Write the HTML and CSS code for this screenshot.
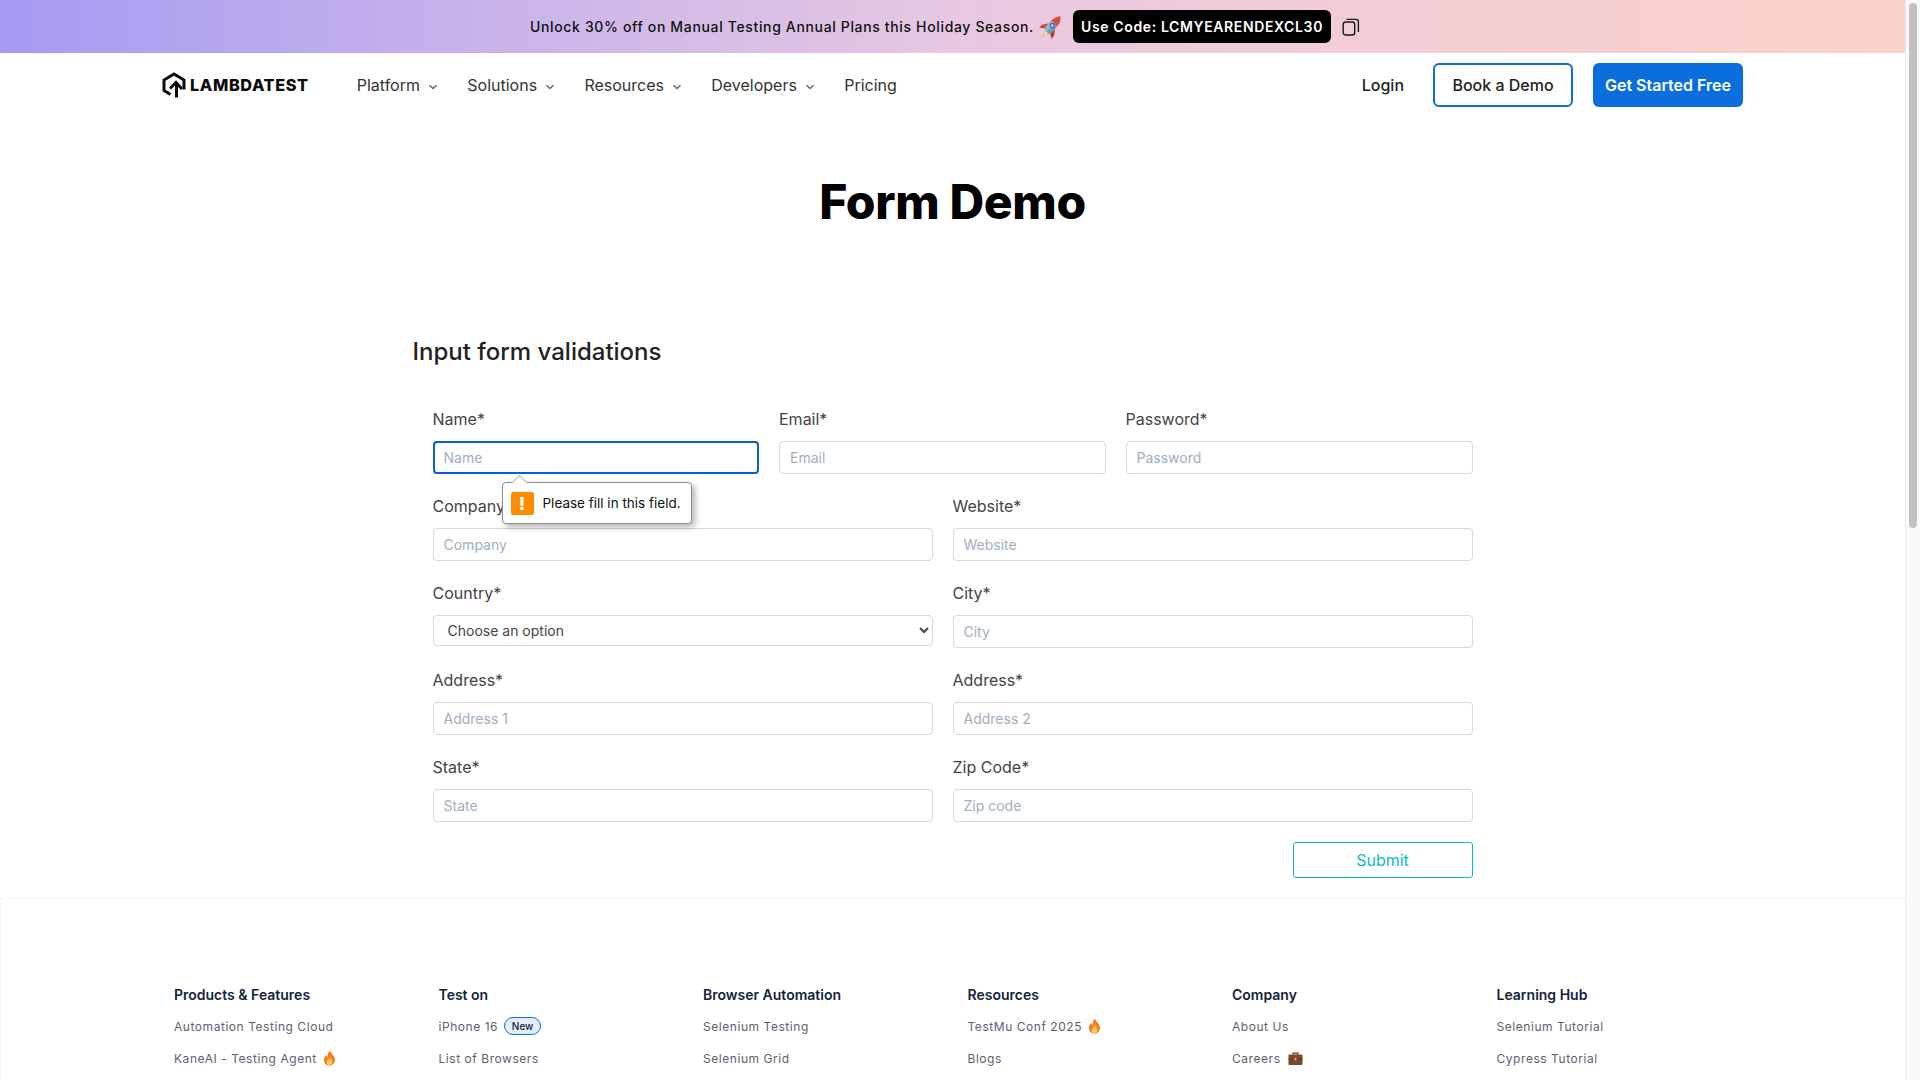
FILE: index.html
```html
<!DOCTYPE html>
<html lang="en">
<head>
<meta charset="utf-8">
<title>Form Demo</title>
<link rel="stylesheet" href="styles.css">
</head>
<body>
<div class="app">
<div class="page">
  <div class="banner">
    <span class="banner-text">Unlock 30% off on Manual Testing Annual Plans this Holiday Season.</span>
    <svg class="rocket" viewBox="0 0 24 24" aria-hidden="true">
      <g transform="rotate(42 12 12)">
        <path d="M9.600 18h4.800L12 26z" fill="#f5b942"/>
        <path d="M10.800 18h2.400L12 23z" fill="#fff2c4"/>
        <path d="M8 10.500 3.800 16.500V20.500L8.800 17z" fill="#d5483c"/>
        <path d="M16 10.500l4.200 6V20.500L15.200 17z" fill="#b93a31"/>
        <path d="M7.800 7H16.200V14.500C16.200 16.500 15.200 18 14.500 18.500H9.500C8.800 18 7.800 16.500 7.800 14.500z" fill="#8db9d3"/>
        <path d="M12 7H16.200V14.500C16.200 16.500 15.200 18 14.500 18.500H12z" fill="#6d9ab8"/>
        <path d="M12-2.500C9.200.5 7.800 4 7.800 7H16.200C16.200 4 14.800.5 12-2.500z" fill="#dc4a3c"/>
        <circle cx="12" cy="10" r="2.500" fill="#3f617b"/>
        <circle cx="12" cy="10" r="1.500" fill="#a8d8ef"/>
      </g>
    </svg>
    <span class="code">Use Code: LCMYEARENDEXCL30</span>
    <svg class="copy" viewBox="0 0 18 18" aria-hidden="true">
      <rect x="1.200" y="4" width="11.500" height="13" rx="2.500" fill="none" stroke="#1a1a1a" stroke-width="1.400"/>
      <path d="M5 1.400h8.800c1.500 0 2.600 1.100 2.600 2.600v9.600" fill="none" stroke="#1a1a1a" stroke-width="1.400" stroke-linecap="round"/>
    </svg>
  </div>

  <nav class="nav">
    <a class="logo">
      <svg class="logo-icon" viewBox="0 0 24 26" aria-hidden="true">
        <path d="M8.500 22.500 2 18.500V8L12 2l10 6v9.500" fill="none" stroke="#0b0b0b" stroke-width="3" stroke-linejoin="miter"/>
        <path d="M14.500 25.500V12M8 16.500l6-6 6 6.500" fill="none" stroke="#0b0b0b" stroke-width="3"/>
      </svg>
      <span class="logo-text">LAMBDATEST</span>
    </a>
    <ul class="menu">
      <li class="menu-item">Platform<svg class="chev" viewBox="0 0 10 6"><path d="M1.500 1.200 5 4.500l3.500-3.300" fill="none" stroke="#666" stroke-width="1.500"/></svg></li>
      <li class="menu-item">Solutions<svg class="chev" viewBox="0 0 10 6"><path d="M1.500 1.200 5 4.500l3.500-3.300" fill="none" stroke="#666" stroke-width="1.500"/></svg></li>
      <li class="menu-item">Resources<svg class="chev" viewBox="0 0 10 6"><path d="M1.500 1.200 5 4.500l3.500-3.300" fill="none" stroke="#666" stroke-width="1.500"/></svg></li>
      <li class="menu-item">Developers<svg class="chev" viewBox="0 0 10 6"><path d="M1.500 1.200 5 4.500l3.500-3.300" fill="none" stroke="#666" stroke-width="1.500"/></svg></li>
      <li class="menu-item">Pricing</li>
    </ul>
    <div class="nav-actions">
      <a class="login">Login</a>
      <a class="btn btn-outline">Book a Demo</a>
      <a class="btn btn-solid">Get Started Free</a>
    </div>
  </nav>

  <h1 class="title">Form Demo</h1>

  <section class="container">
    <h2 class="subtitle">Input form validations</h2>
    <form class="form">
      <div class="row row-3">
        <div class="field field-tip">
          <label class="label">Name*</label>
          <input class="input input-focus" placeholder="Name">
          <div class="tip">
            <span class="tip-arrow"></span>
            <span class="tip-icon">!</span>
            <span class="tip-text">Please fill in this field.</span>
          </div>
        </div>
        <div class="field"><label class="label">Email*</label><input class="input" placeholder="Email"></div>
        <div class="field"><label class="label">Password*</label><input class="input" placeholder="Password"></div>
      </div>
      <div class="row row-2">
        <div class="field"><label class="label">Company*</label><input class="input" placeholder="Company"></div>
        <div class="field"><label class="label">Website*</label><input class="input" placeholder="Website"></div>
      </div>
      <div class="row row-2">
        <div class="field"><label class="label">Country*</label>
          <select class="select"><option>Choose an option</option></select>
        </div>
        <div class="field"><label class="label">City*</label><input class="input" placeholder="City"></div>
      </div>
      <div class="row row-2">
        <div class="field"><label class="label">Address*</label><input class="input" placeholder="Address 1"></div>
        <div class="field"><label class="label">Address*</label><input class="input" placeholder="Address 2"></div>
      </div>
      <div class="row row-2">
        <div class="field"><label class="label">State*</label><input class="input" placeholder="State"></div>
        <div class="field"><label class="label">Zip Code*</label><input class="input" placeholder="Zip code"></div>
      </div>
      <div class="actions"><button type="button" class="submit">Submit</button></div>
    </form>
  </section>

  <footer class="footer">
    <div class="foot-col">
      <h3 class="foot-head">Products &amp; Features</h3>
      <a class="foot-link">Automation Testing Cloud</a>
      <a class="foot-link">KaneAI - Testing Agent
        <svg class="emoji" viewBox="0 0 14 18"><path d="M7.500.5c.6 3 4 5 5.300 8.200C14.300 13 11.500 17.500 7 17.500S-.3 13.500 1 9.200c.5-1.700 1.500-2.700 2.200-3.700.2 1.200.6 2 1.400 2.600C4.600 5.200 5.500 2.500 7.500.5z" fill="#f4801f"/><path d="M7.300 8c.3 1.800 2.700 3 2.700 5.500 0 2.200-1.400 3.600-3 3.600s-3-1.400-3-3.400c0-1.600 1.100-2.300 1.600-3.200.2.600.5 1 .9 1.200C6.400 10.500 6.600 9 7.300 8z" fill="#fcd25a"/></svg>
      </a>
    </div>
    <div class="foot-col">
      <h3 class="foot-head">Test on</h3>
      <a class="foot-link">iPhone 16 <span class="badge">New</span></a>
      <a class="foot-link">List of Browsers</a>
    </div>
    <div class="foot-col">
      <h3 class="foot-head">Browser Automation</h3>
      <a class="foot-link">Selenium Testing</a>
      <a class="foot-link">Selenium Grid</a>
    </div>
    <div class="foot-col">
      <h3 class="foot-head">Resources</h3>
      <a class="foot-link">TestMu Conf 2025
        <svg class="emoji" viewBox="0 0 14 18"><path d="M7.500.5c.6 3 4 5 5.300 8.200C14.300 13 11.500 17.500 7 17.500S-.3 13.500 1 9.200c.5-1.700 1.500-2.700 2.200-3.700.2 1.200.6 2 1.400 2.600C4.600 5.200 5.500 2.500 7.500.5z" fill="#f4801f"/><path d="M7.300 8c.3 1.800 2.700 3 2.700 5.500 0 2.200-1.400 3.600-3 3.600s-3-1.400-3-3.400c0-1.600 1.100-2.300 1.600-3.200.2.600.5 1 .9 1.200C6.400 10.500 6.600 9 7.300 8z" fill="#fcd25a"/></svg>
      </a>
      <a class="foot-link">Blogs</a>
    </div>
    <div class="foot-col">
      <h3 class="foot-head">Company</h3>
      <a class="foot-link">About Us</a>
      <a class="foot-link">Careers
        <svg class="emoji emoji-case" viewBox="0 0 16 16"><path d="M5.500 4V2.200h5V4" fill="none" stroke="#5b3a22" stroke-width="1.400"/><rect x="0.500" y="3.600" width="15" height="11.400" rx="1.200" fill="#7a4a2b"/><rect x="0.500" y="8.200" width="15" height="1" fill="#5b3a22"/><rect x="7" y="7.400" width="2" height="2.600" fill="#e5b567"/></svg>
      </a>
    </div>
    <div class="foot-col">
      <h3 class="foot-head">Learning Hub</h3>
      <a class="foot-link">Selenium Tutorial</a>
      <a class="foot-link">Cypress Tutorial</a>
    </div>
  </footer>
</div>
<aside class="scrollbar"><div class="thumb"></div></aside>
</div>
</body>
</html>
```
FILE: styles.css
```css
* { box-sizing: border-box; }
html, body { margin: 0; height: 100%; overflow: hidden; }
body { font-family: Inter, "Noto Sans", sans-serif; color: #333; background: #fff; }
.app { display: flex; height: 100vh; overflow: hidden; }
.page { flex: 1; min-width: 0; overflow: hidden; }

.scrollbar { width: 15px; flex: none; background: #fafafa; border-left: 1px solid #ececec; padding: 3px 3px 0 3px; }
.thumb { width: 8px; height: 525px; background: #c1c1c1; border-radius: 4px; }

.banner { height: 53px; padding-right: 15px; display: flex; align-items: center; justify-content: center; background: linear-gradient(90deg, #a59bf3 0%, #c7b2ea 25%, #e7c7e2 50%, #f2cdd6 70%, #f9d3c9 100%); }
.banner-text { font-size: 14px; font-weight: 500; letter-spacing: .65px; color: #111; }
.rocket { width: 24px; height: 24px; margin-left: 5px; }
.code { margin-left: 10px; height: 33px; display: flex; align-items: center; padding: 0 8px; background: #000; color: #fff; border-radius: 6px; font-size: 14px; font-weight: 600; letter-spacing: .63px; }
.copy { width: 18px; height: 18px; margin-left: 11px; }

.nav { height: 64px; display: flex; align-items: center; padding: 0 162px 0 162px; }
.logo { display: flex; align-items: center; gap: 4px; }
.logo-icon { width: 24px; height: 26px; }
.logo-text { font-size: 16.300px; font-weight: 800; letter-spacing: .6px; color: #0b0b0b; }
.menu { display: flex; list-style: none; margin: 0 0 0 48px; padding: 0; gap: 29.300px; }
.menu-item { display: flex; align-items: center; gap: 8px; font-size: 16px; font-weight: 400; color: #333; }
.chev { width: 10px; height: 6px; margin-top: 3px; }
.nav-actions { margin-left: auto; display: flex; align-items: center; }
.login { font-size: 16px; font-weight: 500; color: #222; margin-right: 29px; }
.btn { height: 44px; display: flex; align-items: center; justify-content: center; border-radius: 6px; font-size: 16px; }
.btn-outline { width: 140px; border: 2px solid #0a6edd; color: #222; font-weight: 500; margin-right: 20px; }
.btn-solid { width: 150px; background: #0a6edd; color: #fff; font-weight: 600; }

.title { margin: 55px 0 0; text-align: center; font-size: 48px; line-height: 60px; font-weight: 800; letter-spacing: -.35px; color: #000; }

.container { width: 1080px; margin: 104px auto 0; }
.subtitle { margin: 0 0 39px; font-size: 24px; line-height: 32px; font-weight: 500; color: #222; }
.form { padding: 0 20px; display: flex; flex-direction: column; gap: 20px; }
.row { display: grid; column-gap: 20px; }
.row-3 { grid-template-columns: 326.500px 326.500px 347px; }
.row-2 { grid-template-columns: 500px 520px; }
.field { display: flex; flex-direction: column; height: 67px; }
.field-tip { position: relative; }
.label { font-size: 16px; line-height: 24px; margin-bottom: 10px; color: #444; }
.input { height: 33px; width: 100%; padding: 0 10px; border: 1px solid #d6d8db; border-radius: 4px; font: 400 14px Inter, sans-serif; color: #333; outline: none; background: #fff; }
.input::placeholder { color: #a0aec0; opacity: 1; }
.input-focus { border: 2px solid #0a5fcf; padding: 0 9px; }
.select { height: 31px; width: 100%; padding: 0 10px; border: 1px solid #d6d8db; border-radius: 4px; font: 400 14px Inter, sans-serif; color: #444; background: #fff; }

.tip { position: absolute; left: 69px; top: 75px; width: 190px; height: 42px; display: flex; align-items: center; padding: 0 8px; gap: 9px; background: #fff; border: 1px solid #8f8f8f; border-radius: 4px; box-shadow: 3px 3px 6px rgba(0,0,0,.3); z-index: 3; }
.tip-arrow { position: absolute; left: 11px; top: -6px; width: 11px; height: 11px; background: #fff; border-left: 1px solid #b5b5b5; border-top: 1px solid #b5b5b5; transform: rotate(45deg); }
.tip-icon { flex: none; width: 23px; height: 23px; display: flex; align-items: center; justify-content: center; background: #ff8c00; border-radius: 2px; color: #fff; font-size: 18px; font-weight: 800; }
.tip-text { font-size: 13.500px; color: #111; white-space: nowrap; }

.actions { display: flex; justify-content: flex-end; }
.submit { width: 180px; height: 36px; background: #fff; border: 1px solid #0ebac5; border-radius: 3px; color: #0ebac5; font: 400 16px Inter, sans-serif; }

.footer { margin-top: 20px; height: 300px; padding: 86px 0 0 173px; display: grid; grid-template-columns: repeat(6, 264.500px); align-content: start; border-top: 1px solid #f3f4f6; border-left: 1px solid #f7f7f7; }
.foot-col { display: flex; flex-direction: column; gap: 12px; }
.foot-head { margin: 0 0 -1px; font-size: 14px; line-height: 20px; font-weight: 600; color: #16233b; }
.foot-link { display: flex; align-items: center; gap: 6px; height: 20px; font-size: 12px; letter-spacing: .55px; color: #5c6170; white-space: nowrap; }
.emoji { width: 13px; height: 16px; }
.emoji-case { width: 15px; height: 15px; margin-left: 1px; }
.badge { display: inline-flex; align-items: center; justify-content: center; width: 37px; height: 18px; margin-left: 0; background: #e3edfb; border: 1px solid #0a6edd; border-radius: 9px; font-size: 10px; letter-spacing: 0; color: #16233b; font-weight: 500; }
```
